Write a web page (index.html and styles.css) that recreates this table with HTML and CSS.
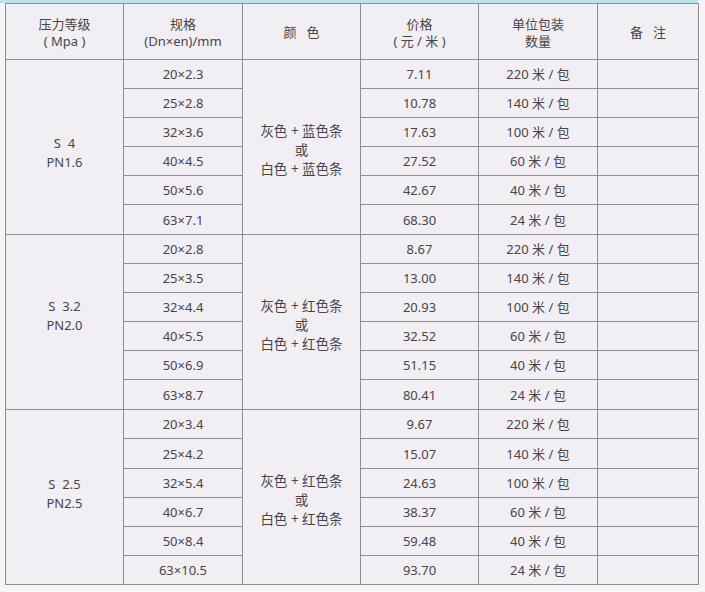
FILE: index.html
```html
<!DOCTYPE html>
<html lang="zh">
<head>
<meta charset="utf-8">
<link rel="stylesheet" href="styles.css">
</head>
<body>
<div class="strip"></div>
<table class="spec">
  <colgroup>
    <col class="c1"><col class="c2"><col class="c3"><col class="c4"><col class="c5"><col class="c6">
  </colgroup>
  <thead>
    <tr class="head">
      <th>压力等级<br>( Mpa )</th>
      <th>规格<br>(Dn×en)/mm</th>
      <th>颜&nbsp;&nbsp;&nbsp;色</th>
      <th>价格<br>( 元 / 米 )</th>
      <th>单位包装<br>数量</th>
      <th>备&nbsp;&nbsp;&nbsp;注</th>
    </tr>
  </thead>
  <tbody>
    <tr><td rowspan="6" class="grp g1">S&nbsp;&nbsp;4<br>PN1.6</td><td>20×2.3</td><td rowspan="6" class="clr">灰色 + 蓝色条<br>或<br>白色 + 蓝色条</td><td>7.11</td><td>220 米 / 包</td><td></td></tr>
    <tr><td>25×2.8</td><td>10.78</td><td>140 米 / 包</td><td></td></tr>
    <tr><td>32×3.6</td><td>17.63</td><td>100 米 / 包</td><td></td></tr>
    <tr><td>40×4.5</td><td>27.52</td><td>60 米 / 包</td><td></td></tr>
    <tr><td>50×5.6</td><td>42.67</td><td>40 米 / 包</td><td></td></tr>
    <tr class="tall"><td>63×7.1</td><td>68.30</td><td>24 米 / 包</td><td></td></tr>

    <tr><td rowspan="6" class="grp g2">S&nbsp;&nbsp;3.2<br>PN2.0</td><td>20×2.8</td><td rowspan="6" class="clr">灰色 + 红色条<br>或<br>白色 + 红色条</td><td>8.67</td><td>220 米 / 包</td><td></td></tr>
    <tr><td>25×3.5</td><td>13.00</td><td>140 米 / 包</td><td></td></tr>
    <tr><td>32×4.4</td><td>20.93</td><td>100 米 / 包</td><td></td></tr>
    <tr><td>40×5.5</td><td>32.52</td><td>60 米 / 包</td><td></td></tr>
    <tr><td>50×6.9</td><td>51.15</td><td>40 米 / 包</td><td></td></tr>
    <tr class="tall"><td>63×8.7</td><td>80.41</td><td>24 米 / 包</td><td></td></tr>

    <tr><td rowspan="6" class="grp g3">S&nbsp;&nbsp;2.5<br>PN2.5</td><td>20×3.4</td><td rowspan="6" class="clr">灰色 + 红色条<br>或<br>白色 + 红色条</td><td>9.67</td><td>220 米 / 包</td><td></td></tr>
    <tr class="tall"><td>25×4.2</td><td>15.07</td><td>140 米 / 包</td><td></td></tr>
    <tr><td>32×5.4</td><td>24.63</td><td>100 米 / 包</td><td></td></tr>
    <tr><td>40×6.7</td><td>38.37</td><td>60 米 / 包</td><td></td></tr>
    <tr><td>50×8.4</td><td>59.48</td><td>40 米 / 包</td><td></td></tr>
    <tr><td>63×10.5</td><td>93.70</td><td>24 米 / 包</td><td></td></tr>
  </tbody>
</table>
</body>
</html>
```
FILE: styles.css
```css
html, body {
  margin: 0;
  padding: 0;
}
body {
  background: #f6f4f7;
  font-family: "Noto Sans", "Noto Sans CJK SC", sans-serif;
  color: #47454a;
  width: 705px;
  height: 592px;
  overflow: hidden;
}
.strip {
  height: 3px;
  width: 698px;
  background: #bfe3ec;
}
.spec {
  margin-left: 5px;
  border-collapse: collapse;
  table-layout: fixed;
  width: 693px;
  background: #f1eff3;
  font-size: 13px;
}
.c1 { width: 118px; }
.c2 { width: 119px; }
.c3 { width: 118px; }
.c4 { width: 118px; }
.c5 { width: 119px; }
.c6 { width: 101px; }
.spec th, .spec td {
  border: 1px solid #8f8d91;
  padding: 0;
  text-align: center;
  vertical-align: middle;
  font-weight: normal;
  line-height: 16px;
}
.spec tr.head th {
  height: 53px;
  line-height: 17px;
  padding-top: 2px;
}
.spec tbody tr {
  height: 29px;
}
.spec tbody tr.tall {
  height: 30px;
}
.spec td.grp {
  line-height: 19px;
}
.spec td.g1 { padding-top: 12px; }
.spec td.g2 { padding-bottom: 12px; }
.spec td.g3 { padding-bottom: 6px; }
.spec td.clr {
  font-size: 13.5px;
  line-height: 19px;
  padding-top: 6px;
}
```
